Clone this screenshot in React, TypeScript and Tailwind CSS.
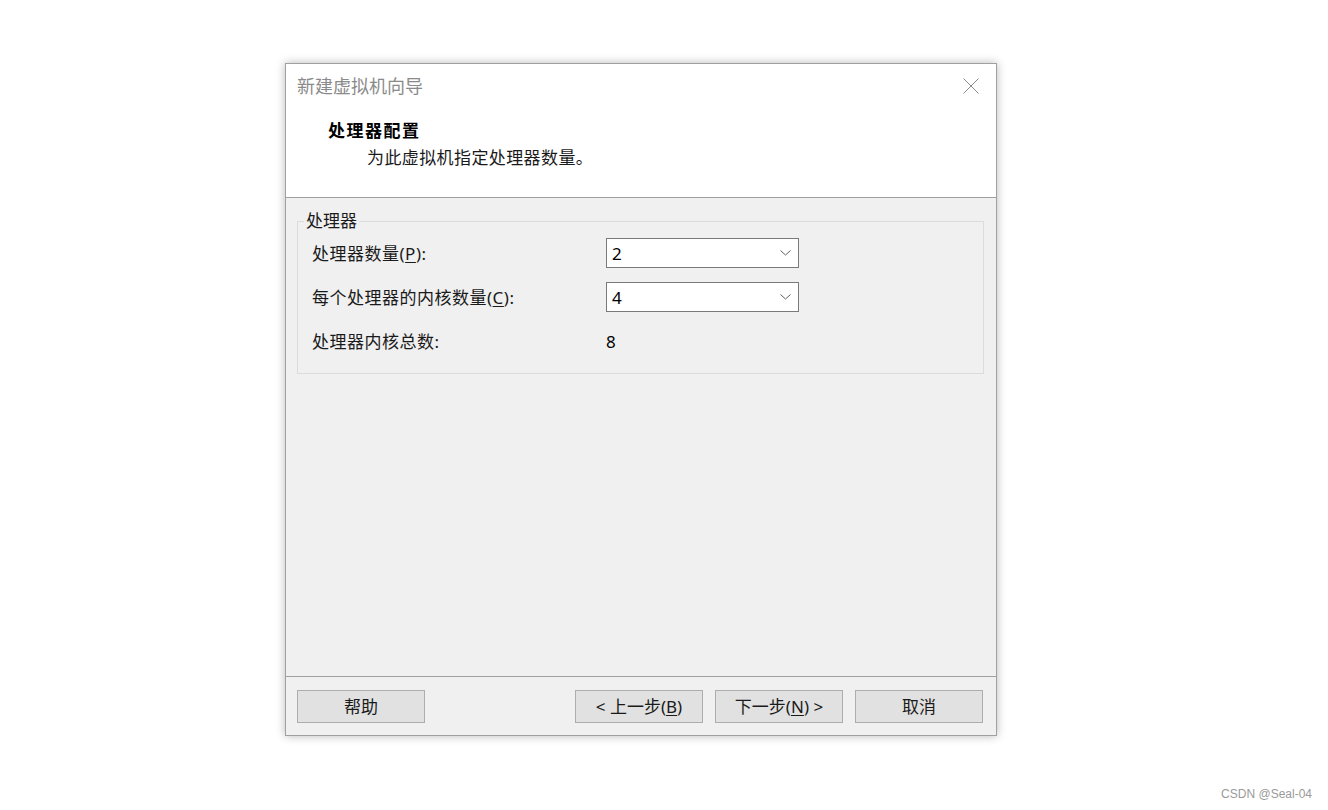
import type {ReactNode} from 'react'

const cjk = '[font-family:"Noto_Sans","Noto_Sans_CJK_SC",sans-serif]'

const Btn = ({children}: {children: ReactNode}) => (
  <button className="flex h-[33px] w-[128px] items-center justify-center border border-[#adadad] bg-[#e1e1e1] text-[17px] leading-none text-[#1a1a1a]">
    {children}
  </button>
)

const Combo = ({value}: {value: string}) => (
  <div className="flex h-[30px] w-[193px] items-center justify-between border border-[#7a7a7a] bg-white pr-[7px] pl-[5px]">
    <span className="text-[17px] leading-none text-black">{value}</span>
    <svg width="11" height="6" viewBox="0 0 11 6" className="text-[#606060]">
      <path d="M0.5 0.5 L5.5 5 L10.5 0.5" fill="none" stroke="currentColor" strokeWidth="1" />
    </svg>
  </div>
)

export default function App() {
  return (
    <div className={`flex h-[810px] w-[1328px] flex-col bg-white ${cjk}`}>
      <div className="pt-[63px] pl-[285px]">
        {/* 对话框 */}
        <div className="flex h-[673px] w-[712px] flex-col border border-[#a0a0a0] bg-white shadow-[0_0_9px_rgba(0,0,0,0.28)]">
          {/* 头部 */}
          <div className="flex h-[134px] flex-col border-b border-[#a0a0a0] bg-white">
            <div className="mt-[10px] flex h-[24px] items-center justify-between pr-[17px] pl-[11px]">
              <span className="text-[18px] leading-[24px] text-[#8a8a8a]">新建虚拟机向导</span>
              <svg width="16" height="16" viewBox="0 0 16 16" className="text-[#8a8a8a]">
                <path d="M0.5 0.5 L15.5 15.5 M15.5 0.5 L0.5 15.5" stroke="currentColor" strokeWidth="1" />
              </svg>
            </div>
            <div className="mt-[22px] pl-[42px] text-[17px] leading-[22px] font-bold tracking-[1.5px] text-black">
              处理器配置
            </div>
            <div className="mt-[5px] pl-[81px] text-[17px] leading-[22px] tracking-[0.4px] text-[#1a1a1a]">
              为此虚拟机指定处理器数量。
            </div>
          </div>

          {/* 内容 */}
          <div className="flex-1 bg-[#f0f0f0] pt-[13px] pr-[12px] pl-[11px]">
            <fieldset className="border border-[#dcdcdc] pr-[14px] pb-[17px] pl-[14px]">
              <legend className="ml-[-8px] px-[2px] text-[17px] leading-[20px] text-[#1a1a1a]">处理器</legend>
              <div className="mt-[7px] flex flex-col gap-[14px] text-[17px] leading-none text-[#1a1a1a]">
                <div className="flex h-[30px] items-center">
                  <span className="w-[294px] tracking-[0.5px]">
                    处理器数量(<span className="underline underline-offset-2">P</span>):
                  </span>
                  <Combo value="2" />
                </div>
                <div className="flex h-[30px] items-center">
                  <span className="w-[294px] tracking-[0.5px]">
                    每个处理器的内核数量(<span className="underline underline-offset-2">C</span>):
                  </span>
                  <Combo value="4" />
                </div>
                <div className="flex h-[30px] items-center">
                  <span className="w-[294px] tracking-[0.5px]">处理器内核总数:</span>
                  <span className="text-black">8</span>
                </div>
              </div>
            </fieldset>
          </div>

          {/* 底部按钮 */}
          <div className="flex h-[59px] items-start justify-between border-t border-[#a0a0a0] bg-[#f0f0f0] pt-[13px] pr-[13px] pl-[11px]">
            <Btn>帮助</Btn>
            <div className="flex gap-[12px]">
              <Btn>
                &lt; 上一步(<span className="underline underline-offset-2">B</span>)
              </Btn>
              <Btn>
                下一步(<span className="underline underline-offset-2">N</span>) &gt;
              </Btn>
              <Btn>取消</Btn>
            </div>
          </div>
        </div>
      </div>
      <div className="mt-auto pr-[16px] pb-[7px] text-right text-[12px] text-[#9a9a9a] [font-family:'Liberation_Sans',sans-serif]">
        CSDN @Seal-04
      </div>
    </div>
  )
}
